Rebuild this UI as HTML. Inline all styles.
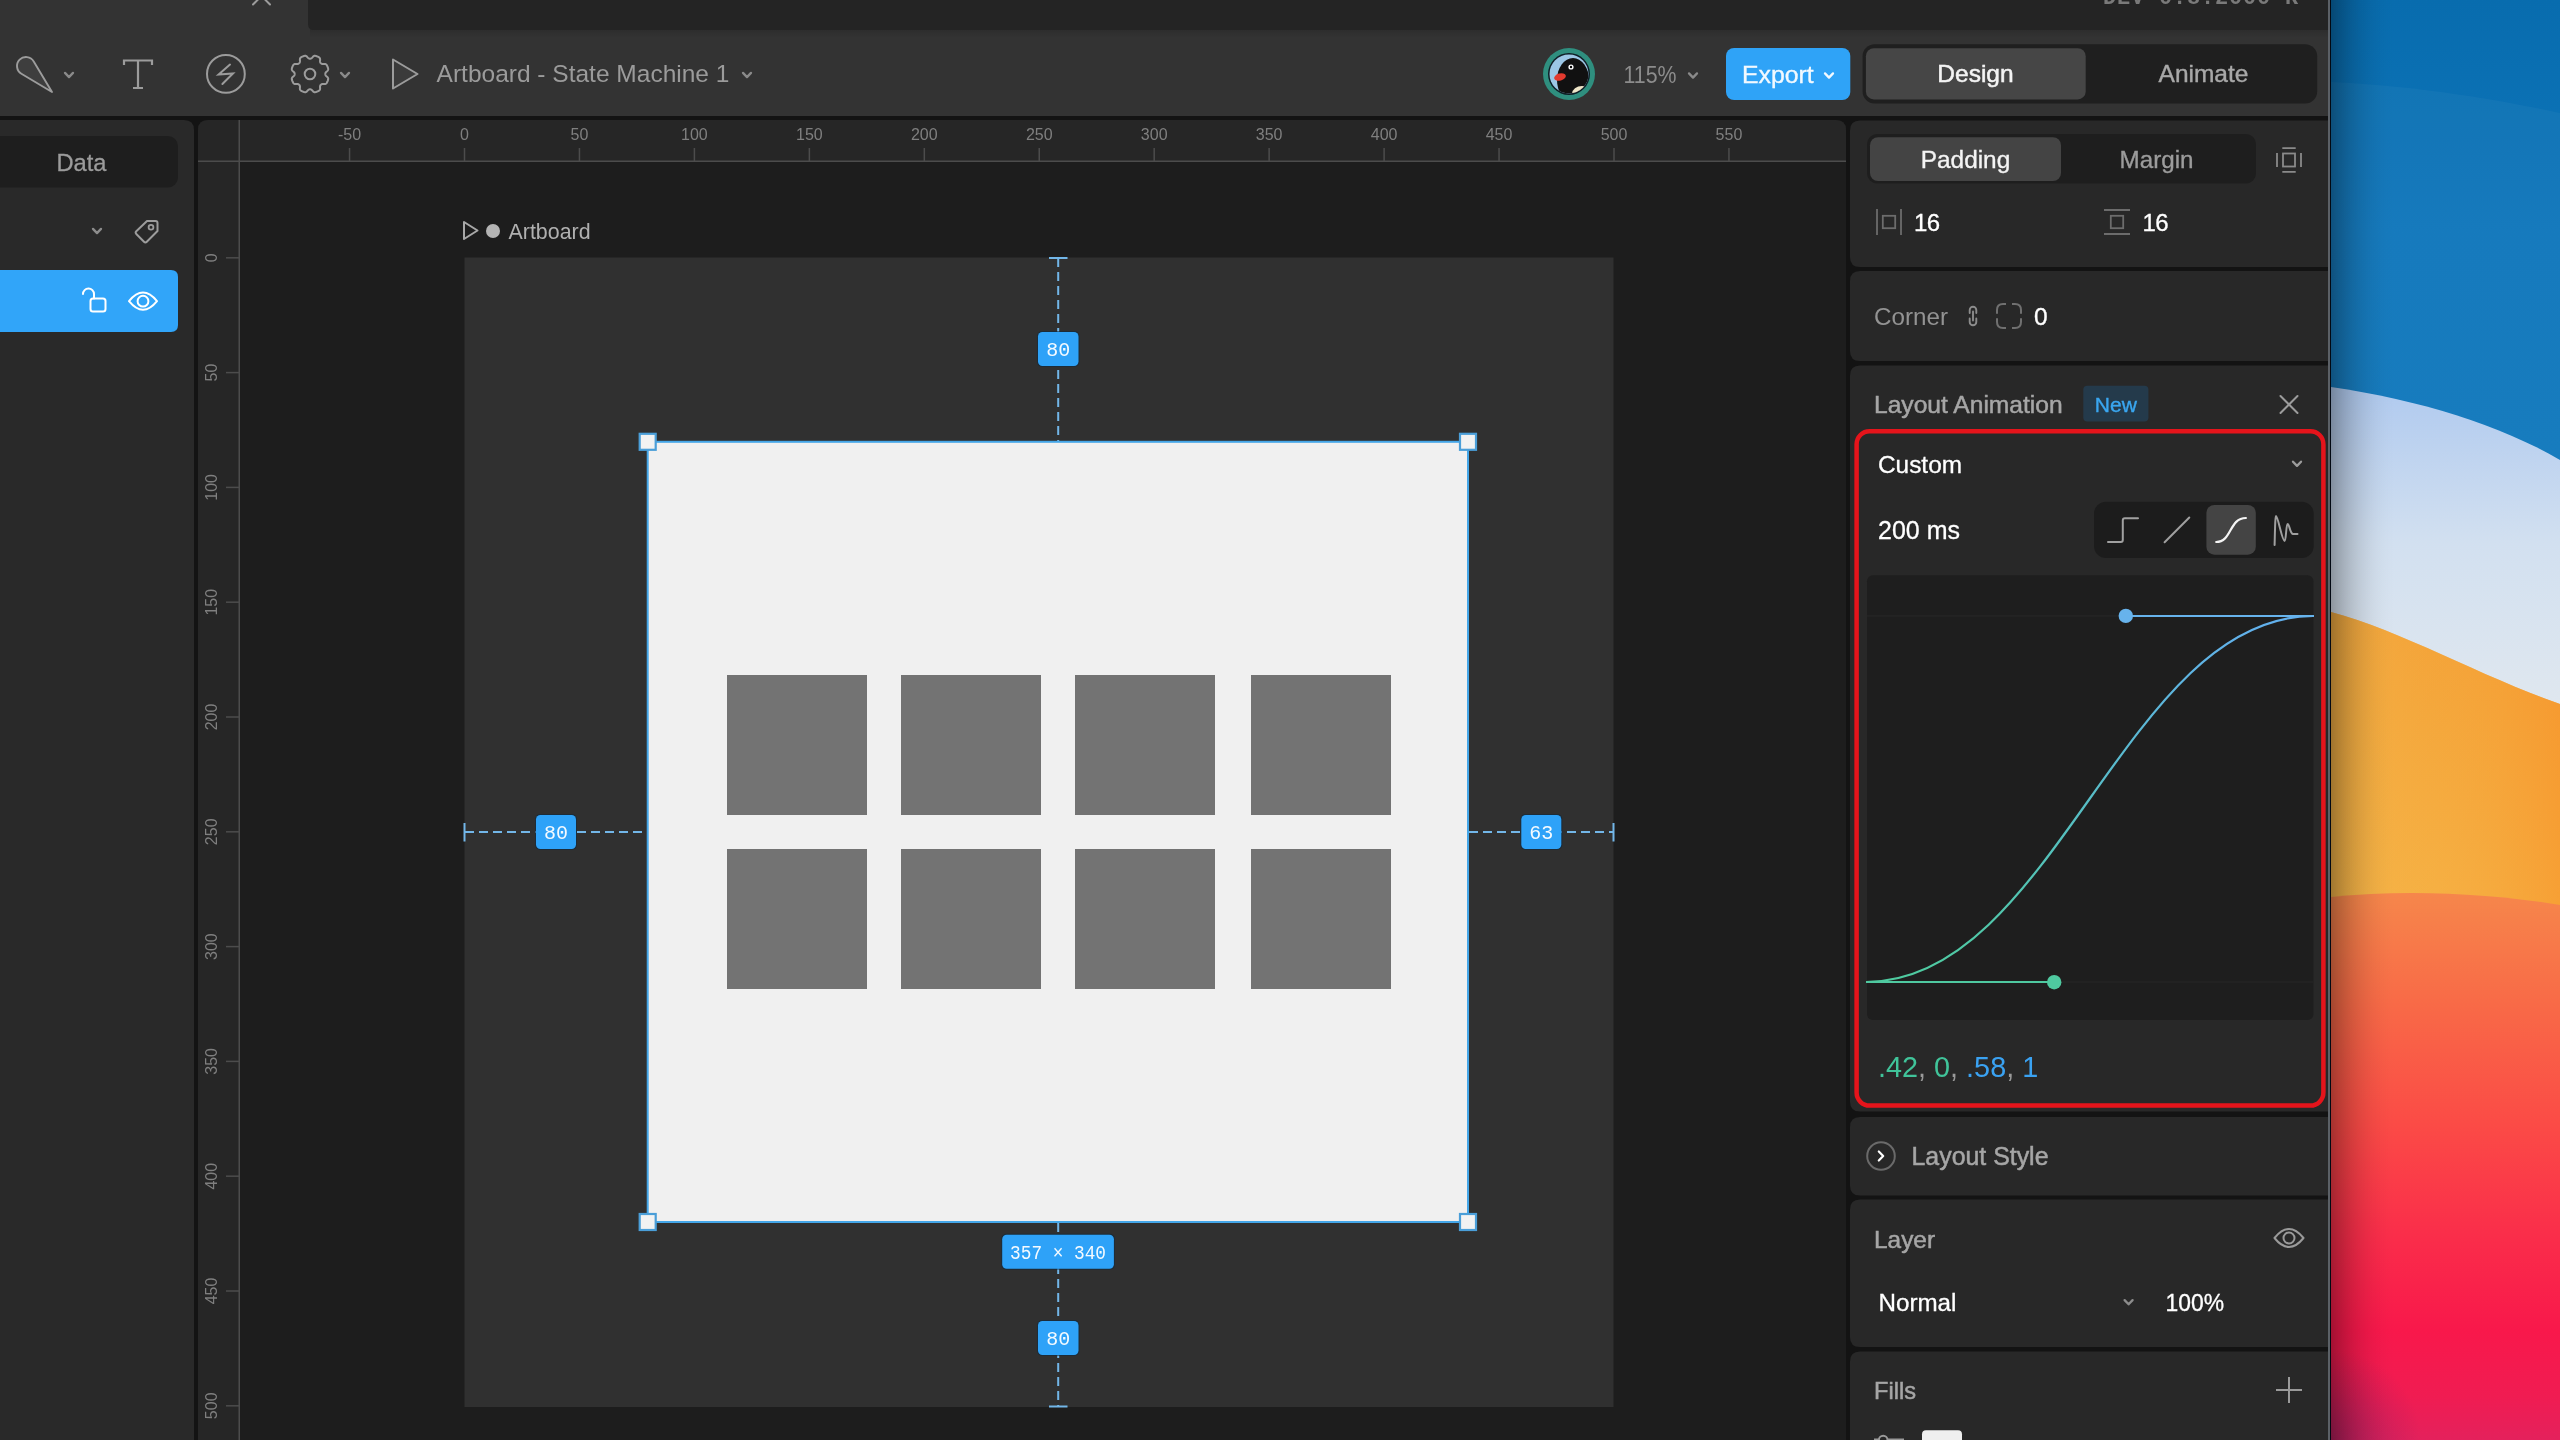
<!DOCTYPE html>
<html><head><meta charset="utf-8"><style>
html,body{margin:0;padding:0;width:2560px;height:1440px;overflow:hidden;background:#131313}
svg{display:block;will-change:transform}
</style></head><body>
<svg width="2560" height="1440" viewBox="0 0 2560 1440">
<rect x="0" y="0" width="2330" height="116" fill="#333333"/>
<linearGradient id="tsh" x1="0" y1="26" x2="0" y2="38" gradientUnits="userSpaceOnUse"><stop offset="0" stop-color="#000" stop-opacity="0.18"/><stop offset="1" stop-color="#000" stop-opacity="0"/></linearGradient>
<rect x="310" y="26" width="2019" height="12" fill="url(#tsh)"/>
<path d="M308 0 H2329 V30 H314 Q308 30 308 24 Z" fill="#242424"/>
<rect x="0" y="116" width="2328" height="1324" fill="#131313"/>
<path d="M0 120 H184 Q194 120 194 130 V1440 H0 Z" fill="#292929"/>
<path d="M208 120 H1836 Q1846 120 1846 130 V1440 H198 V130 Q198 120 208 120 Z" fill="#1d1d1d"/>
<path d="M208 120 H1836 Q1846 120 1846 130 V161 H198 V130 Q198 120 208 120 Z" fill="#262626"/>
<rect x="198" y="161" width="41" height="1279" fill="#262626"/>
<rect x="198" y="160.5" width="1648" height="1.5" fill="#4c4c4c"/>
<rect x="238.5" y="120" width="1.5" height="1320" fill="#4c4c4c"/>
<rect x="348.80" y="148" width="1.5" height="13" fill="#4c4c4c"/>
<text x="349.55" y="140" font-family="Liberation Sans" font-size="16" fill="#7f7f7f" text-anchor="middle">-50</text>
<rect x="463.75" y="148" width="1.5" height="13" fill="#4c4c4c"/>
<text x="464.50" y="140" font-family="Liberation Sans" font-size="16" fill="#7f7f7f" text-anchor="middle">0</text>
<rect x="578.70" y="148" width="1.5" height="13" fill="#4c4c4c"/>
<text x="579.45" y="140" font-family="Liberation Sans" font-size="16" fill="#7f7f7f" text-anchor="middle">50</text>
<rect x="693.65" y="148" width="1.5" height="13" fill="#4c4c4c"/>
<text x="694.40" y="140" font-family="Liberation Sans" font-size="16" fill="#7f7f7f" text-anchor="middle">100</text>
<rect x="808.60" y="148" width="1.5" height="13" fill="#4c4c4c"/>
<text x="809.35" y="140" font-family="Liberation Sans" font-size="16" fill="#7f7f7f" text-anchor="middle">150</text>
<rect x="923.55" y="148" width="1.5" height="13" fill="#4c4c4c"/>
<text x="924.30" y="140" font-family="Liberation Sans" font-size="16" fill="#7f7f7f" text-anchor="middle">200</text>
<rect x="1038.50" y="148" width="1.5" height="13" fill="#4c4c4c"/>
<text x="1039.25" y="140" font-family="Liberation Sans" font-size="16" fill="#7f7f7f" text-anchor="middle">250</text>
<rect x="1153.45" y="148" width="1.5" height="13" fill="#4c4c4c"/>
<text x="1154.20" y="140" font-family="Liberation Sans" font-size="16" fill="#7f7f7f" text-anchor="middle">300</text>
<rect x="1268.40" y="148" width="1.5" height="13" fill="#4c4c4c"/>
<text x="1269.15" y="140" font-family="Liberation Sans" font-size="16" fill="#7f7f7f" text-anchor="middle">350</text>
<rect x="1383.35" y="148" width="1.5" height="13" fill="#4c4c4c"/>
<text x="1384.10" y="140" font-family="Liberation Sans" font-size="16" fill="#7f7f7f" text-anchor="middle">400</text>
<rect x="1498.30" y="148" width="1.5" height="13" fill="#4c4c4c"/>
<text x="1499.05" y="140" font-family="Liberation Sans" font-size="16" fill="#7f7f7f" text-anchor="middle">450</text>
<rect x="1613.25" y="148" width="1.5" height="13" fill="#4c4c4c"/>
<text x="1614.00" y="140" font-family="Liberation Sans" font-size="16" fill="#7f7f7f" text-anchor="middle">500</text>
<rect x="1728.20" y="148" width="1.5" height="13" fill="#4c4c4c"/>
<text x="1728.95" y="140" font-family="Liberation Sans" font-size="16" fill="#7f7f7f" text-anchor="middle">550</text>
<rect x="226" y="257.05" width="13" height="1.5" fill="#4c4c4c"/>
<text transform="translate(217 257.80) rotate(-90)" font-family="Liberation Sans" font-size="16" fill="#7f7f7f" text-anchor="middle">0</text>
<rect x="226" y="371.85" width="13" height="1.5" fill="#4c4c4c"/>
<text transform="translate(217 372.60) rotate(-90)" font-family="Liberation Sans" font-size="16" fill="#7f7f7f" text-anchor="middle">50</text>
<rect x="226" y="486.65" width="13" height="1.5" fill="#4c4c4c"/>
<text transform="translate(217 487.40) rotate(-90)" font-family="Liberation Sans" font-size="16" fill="#7f7f7f" text-anchor="middle">100</text>
<rect x="226" y="601.45" width="13" height="1.5" fill="#4c4c4c"/>
<text transform="translate(217 602.20) rotate(-90)" font-family="Liberation Sans" font-size="16" fill="#7f7f7f" text-anchor="middle">150</text>
<rect x="226" y="716.25" width="13" height="1.5" fill="#4c4c4c"/>
<text transform="translate(217 717.00) rotate(-90)" font-family="Liberation Sans" font-size="16" fill="#7f7f7f" text-anchor="middle">200</text>
<rect x="226" y="831.05" width="13" height="1.5" fill="#4c4c4c"/>
<text transform="translate(217 831.80) rotate(-90)" font-family="Liberation Sans" font-size="16" fill="#7f7f7f" text-anchor="middle">250</text>
<rect x="226" y="945.85" width="13" height="1.5" fill="#4c4c4c"/>
<text transform="translate(217 946.60) rotate(-90)" font-family="Liberation Sans" font-size="16" fill="#7f7f7f" text-anchor="middle">300</text>
<rect x="226" y="1060.65" width="13" height="1.5" fill="#4c4c4c"/>
<text transform="translate(217 1061.40) rotate(-90)" font-family="Liberation Sans" font-size="16" fill="#7f7f7f" text-anchor="middle">350</text>
<rect x="226" y="1175.45" width="13" height="1.5" fill="#4c4c4c"/>
<text transform="translate(217 1176.20) rotate(-90)" font-family="Liberation Sans" font-size="16" fill="#7f7f7f" text-anchor="middle">400</text>
<rect x="226" y="1290.25" width="13" height="1.5" fill="#4c4c4c"/>
<text transform="translate(217 1291.00) rotate(-90)" font-family="Liberation Sans" font-size="16" fill="#7f7f7f" text-anchor="middle">450</text>
<rect x="226" y="1405.05" width="13" height="1.5" fill="#4c4c4c"/>
<text transform="translate(217 1405.80) rotate(-90)" font-family="Liberation Sans" font-size="16" fill="#7f7f7f" text-anchor="middle">500</text>
<path d="M464 222 L477.5 230.5 L464 239 Z" fill="none" stroke="#a8a8a8" stroke-width="2" stroke-linejoin="round"/>
<circle cx="493" cy="231" r="7" fill="#b4b4b4"/>
<text x="508.5" y="238.5" font-family="Liberation Sans" font-size="21.4" fill="#b0b0b0">Artboard</text>
<rect x="464.5" y="257.5" width="1149" height="1149.5" fill="#303030"/>
<rect x="647.7" y="441.8" width="820.3" height="780.2" fill="#f0f0f0"/>
<rect x="727" y="675" width="140" height="140" fill="#737373"/>
<rect x="901" y="675" width="140" height="140" fill="#737373"/>
<rect x="1075" y="675" width="140" height="140" fill="#737373"/>
<rect x="1251" y="675" width="140" height="140" fill="#737373"/>
<rect x="727" y="849" width="140" height="140" fill="#737373"/>
<rect x="901" y="849" width="140" height="140" fill="#737373"/>
<rect x="1075" y="849" width="140" height="140" fill="#737373"/>
<rect x="1251" y="849" width="140" height="140" fill="#737373"/>
<rect x="647.7" y="441.8" width="820.3" height="780.2" fill="none" stroke="#44a6e8" stroke-width="2"/>
<line x1="1058.2" y1="258" x2="1058.2" y2="441" stroke="#72b6e8" stroke-width="2" stroke-dasharray="9 5"/>
<rect x="1049" y="257" width="18.5" height="2" fill="#72b6e8"/>
<line x1="1058.2" y1="1223" x2="1058.2" y2="1406" stroke="#72b6e8" stroke-width="2" stroke-dasharray="9 5"/>
<rect x="1049" y="1405.5" width="18.5" height="2" fill="#72b6e8"/>
<line x1="465" y1="832" x2="647" y2="832" stroke="#72b6e8" stroke-width="2" stroke-dasharray="9 5"/>
<rect x="463.5" y="823" width="2" height="18.5" fill="#72b6e8"/>
<line x1="1469" y1="832" x2="1613" y2="832" stroke="#72b6e8" stroke-width="2" stroke-dasharray="9 5"/>
<rect x="1612.5" y="823" width="2" height="18.5" fill="#72b6e8"/>
<rect x="639.7" y="433.8" width="16" height="16" fill="#f2f2f2" stroke="#4a9ed8" stroke-width="2.2"/>
<rect x="1460" y="433.8" width="16" height="16" fill="#f2f2f2" stroke="#4a9ed8" stroke-width="2.2"/>
<rect x="639.7" y="1214" width="16" height="16" fill="#f2f2f2" stroke="#4a9ed8" stroke-width="2.2"/>
<rect x="1460" y="1214" width="16" height="16" fill="#f2f2f2" stroke="#4a9ed8" stroke-width="2.2"/>
<rect x="1037" y="331" width="42.5" height="36" rx="5" fill="#0f2a40" opacity="0.6"/>
<rect x="1038" y="332" width="40.5" height="34" rx="4.5" fill="#2ea2f8"/>
<text x="1058.25" y="356.0" font-family="Liberation Mono" font-size="20" fill="#f4faff" text-anchor="middle">80</text>
<rect x="1037" y="1320" width="42.5" height="36" rx="5" fill="#0f2a40" opacity="0.6"/>
<rect x="1038" y="1321" width="40.5" height="34" rx="4.5" fill="#2ea2f8"/>
<text x="1058.25" y="1345.0" font-family="Liberation Mono" font-size="20" fill="#f4faff" text-anchor="middle">80</text>
<rect x="535" y="814" width="42" height="36" rx="5" fill="#0f2a40" opacity="0.6"/>
<rect x="536" y="815" width="40" height="34" rx="4.5" fill="#2ea2f8"/>
<text x="556.0" y="839.0" font-family="Liberation Mono" font-size="20" fill="#f4faff" text-anchor="middle">80</text>
<rect x="1520.3" y="814" width="42" height="36" rx="5" fill="#0f2a40" opacity="0.6"/>
<rect x="1521.3" y="815" width="40" height="34" rx="4.5" fill="#2ea2f8"/>
<text x="1541.3" y="839.0" font-family="Liberation Mono" font-size="20" fill="#f4faff" text-anchor="middle">63</text>
<rect x="1001.2" y="1233.8" width="113.7" height="36" rx="5" fill="#0f2a40" opacity="0.6"/>
<rect x="1002.2" y="1234.8" width="111.7" height="34" rx="4.5" fill="#2ea2f8"/>
<text x="1058.05" y="1258.8" font-family="Liberation Mono" font-size="20" fill="#f4faff" text-anchor="middle" textLength="96" lengthAdjust="spacingAndGlyphs">357 × 340</text>
<path d="M253 4.5 L261.5 -4 L270 4.5" fill="none" stroke="#9c9c9c" stroke-width="2" stroke-linecap="round"/>
<text x="2103" y="4" font-family="Liberation Mono" font-size="22" font-weight="bold" fill="#7a7a7a" letter-spacing="0.8">DEV 0.8.2000 R</text>
<path d="M52 92 L21.39 73.73 A9 9 0 1 1 33.73 61.39 Z" fill="#3e3e3e" stroke="#9c9c9c" stroke-width="1.9" stroke-linejoin="round"/>
<path d="M65.0 72.9 L69 77.1 L73.0 72.9" fill="none" stroke="#8a8a8a" stroke-width="2.3" stroke-linecap="round" stroke-linejoin="round"/>
<path d="M124 65 V60.5 H152 V65 M138 60.5 V88 M133 88 H143" fill="none" stroke="#9c9c9c" stroke-width="2.2"/>
<circle cx="225.9" cy="73.9" r="18.9" fill="none" stroke="#9c9c9c" stroke-width="2"/>
<path d="M230 64.6 L218.6 74.6 L233 73.4 L222.4 84" fill="none" stroke="#9c9c9c" stroke-width="2" stroke-linejoin="miter" stroke-linecap="round"/>
<polygon points="325.33,74.00 325.33,74.24 325.36,74.48 325.40,74.73 325.47,74.97 325.57,75.23 325.73,75.49 325.94,75.76 326.22,76.05 326.56,76.36 326.94,76.68 327.32,77.02 327.65,77.37 327.90,77.71 328.07,78.04 328.17,78.36 328.21,78.67 328.20,78.98 328.17,79.28 328.11,79.57 328.04,79.86 327.96,80.15 327.87,80.43 327.77,80.71 327.66,80.99 327.55,81.27 327.44,81.55 327.31,81.82 327.18,82.09 327.05,82.35 326.90,82.61 326.75,82.87 326.58,83.11 326.39,83.35 326.18,83.57 325.93,83.76 325.64,83.92 325.28,84.04 324.86,84.10 324.38,84.11 323.87,84.08 323.37,84.04 322.91,84.02 322.51,84.03 322.17,84.07 321.88,84.15 321.63,84.25 321.40,84.38 321.20,84.52 321.01,84.67 320.84,84.84 320.67,85.01 320.52,85.20 320.38,85.40 320.25,85.63 320.15,85.88 320.07,86.17 320.03,86.51 320.02,86.91 320.04,87.37 320.08,87.87 320.11,88.38 320.10,88.86 320.04,89.28 319.92,89.64 319.76,89.93 319.57,90.18 319.35,90.39 319.11,90.58 318.87,90.75 318.61,90.90 318.35,91.05 318.09,91.18 317.82,91.31 317.55,91.44 317.27,91.55 316.99,91.66 316.71,91.77 316.43,91.87 316.15,91.96 315.86,92.04 315.57,92.11 315.28,92.17 314.98,92.20 314.67,92.21 314.36,92.17 314.04,92.07 313.71,91.90 313.37,91.65 313.02,91.32 312.68,90.94 312.36,90.56 312.05,90.22 311.76,89.94 311.49,89.73 311.23,89.57 310.97,89.47 310.73,89.40 310.48,89.36 310.24,89.33 310.00,89.33 309.76,89.33 309.52,89.36 309.27,89.40 309.03,89.47 308.77,89.57 308.51,89.73 308.24,89.94 307.95,90.22 307.64,90.56 307.32,90.94 306.98,91.32 306.63,91.65 306.29,91.90 305.96,92.07 305.64,92.17 305.33,92.21 305.02,92.20 304.72,92.17 304.43,92.11 304.14,92.04 303.85,91.96 303.57,91.87 303.29,91.77 303.01,91.66 302.73,91.55 302.45,91.44 302.18,91.31 301.91,91.18 301.65,91.05 301.39,90.90 301.13,90.75 300.89,90.58 300.65,90.39 300.43,90.18 300.24,89.93 300.08,89.64 299.96,89.28 299.90,88.86 299.89,88.38 299.92,87.87 299.96,87.37 299.98,86.91 299.97,86.51 299.93,86.17 299.85,85.88 299.75,85.63 299.62,85.40 299.48,85.20 299.33,85.01 299.16,84.84 298.99,84.67 298.80,84.52 298.60,84.38 298.37,84.25 298.12,84.15 297.83,84.07 297.49,84.03 297.09,84.02 296.63,84.04 296.13,84.08 295.62,84.11 295.14,84.10 294.72,84.04 294.36,83.92 294.07,83.76 293.82,83.57 293.61,83.35 293.42,83.11 293.25,82.87 293.10,82.61 292.95,82.35 292.82,82.09 292.69,81.82 292.56,81.55 292.45,81.27 292.34,80.99 292.23,80.71 292.13,80.43 292.04,80.15 291.96,79.86 291.89,79.57 291.83,79.28 291.80,78.98 291.79,78.67 291.83,78.36 291.93,78.04 292.10,77.71 292.35,77.37 292.68,77.02 293.06,76.68 293.44,76.36 293.78,76.05 294.06,75.76 294.27,75.49 294.43,75.23 294.53,74.97 294.60,74.73 294.64,74.48 294.67,74.24 294.67,74.00 294.67,73.76 294.64,73.52 294.60,73.27 294.53,73.03 294.43,72.77 294.27,72.51 294.06,72.24 293.78,71.95 293.44,71.64 293.06,71.32 292.68,70.98 292.35,70.63 292.10,70.29 291.93,69.96 291.83,69.64 291.79,69.33 291.80,69.02 291.83,68.72 291.89,68.43 291.96,68.14 292.04,67.85 292.13,67.57 292.23,67.29 292.34,67.01 292.45,66.73 292.56,66.45 292.69,66.18 292.82,65.91 292.95,65.65 293.10,65.39 293.25,65.13 293.42,64.89 293.61,64.65 293.82,64.43 294.07,64.24 294.36,64.08 294.72,63.96 295.14,63.90 295.62,63.89 296.13,63.92 296.63,63.96 297.09,63.98 297.49,63.97 297.83,63.93 298.12,63.85 298.37,63.75 298.60,63.62 298.80,63.48 298.99,63.33 299.16,63.16 299.33,62.99 299.48,62.80 299.62,62.60 299.75,62.37 299.85,62.12 299.93,61.83 299.97,61.49 299.98,61.09 299.96,60.63 299.92,60.13 299.89,59.62 299.90,59.14 299.96,58.72 300.08,58.36 300.24,58.07 300.43,57.82 300.65,57.61 300.89,57.42 301.13,57.25 301.39,57.10 301.65,56.95 301.91,56.82 302.18,56.69 302.45,56.56 302.73,56.45 303.01,56.34 303.29,56.23 303.57,56.13 303.85,56.04 304.14,55.96 304.43,55.89 304.72,55.83 305.02,55.80 305.33,55.79 305.64,55.83 305.96,55.93 306.29,56.10 306.63,56.35 306.98,56.68 307.32,57.06 307.64,57.44 307.95,57.78 308.24,58.06 308.51,58.27 308.77,58.43 309.03,58.53 309.27,58.60 309.52,58.64 309.76,58.67 310.00,58.67 310.24,58.67 310.48,58.64 310.73,58.60 310.97,58.53 311.23,58.43 311.49,58.27 311.76,58.06 312.05,57.78 312.36,57.44 312.68,57.06 313.02,56.68 313.37,56.35 313.71,56.10 314.04,55.93 314.36,55.83 314.67,55.79 314.98,55.80 315.28,55.83 315.57,55.89 315.86,55.96 316.15,56.04 316.43,56.13 316.71,56.23 316.99,56.34 317.27,56.45 317.55,56.56 317.82,56.69 318.09,56.82 318.35,56.95 318.61,57.10 318.87,57.25 319.11,57.42 319.35,57.61 319.57,57.82 319.76,58.07 319.92,58.36 320.04,58.72 320.10,59.14 320.11,59.62 320.08,60.13 320.04,60.63 320.02,61.09 320.03,61.49 320.07,61.83 320.15,62.12 320.25,62.37 320.38,62.60 320.52,62.80 320.67,62.99 320.84,63.16 321.01,63.33 321.20,63.48 321.40,63.62 321.63,63.75 321.88,63.85 322.17,63.93 322.51,63.97 322.91,63.98 323.37,63.96 323.87,63.92 324.38,63.89 324.86,63.90 325.28,63.96 325.64,64.08 325.93,64.24 326.18,64.43 326.39,64.65 326.58,64.89 326.75,65.13 326.90,65.39 327.05,65.65 327.18,65.91 327.31,66.18 327.44,66.45 327.55,66.73 327.66,67.01 327.77,67.29 327.87,67.57 327.96,67.85 328.04,68.14 328.11,68.43 328.17,68.72 328.20,69.02 328.21,69.33 328.17,69.64 328.07,69.96 327.90,70.29 327.65,70.63 327.32,70.98 326.94,71.32 326.56,71.64 326.22,71.95 325.94,72.24 325.73,72.51 325.57,72.77 325.47,73.03 325.40,73.27 325.36,73.52 325.33,73.76 325.33,74.00" fill="none" stroke="#9c9c9c" stroke-width="2"/>
<circle cx="310" cy="74" r="5.3" fill="none" stroke="#9c9c9c" stroke-width="2"/>
<path d="M341.0 72.9 L345 77.1 L349.0 72.9" fill="none" stroke="#8a8a8a" stroke-width="2.3" stroke-linecap="round" stroke-linejoin="round"/>
<path d="M393 59.5 L417.5 74 L393 88.5 Z" fill="#3b3b3b" stroke="#9c9c9c" stroke-width="2" stroke-linejoin="round"/>
<text x="436.6" y="82" font-family="Liberation Sans" font-size="24.5" fill="#9b9b9b">Artboard - State Machine 1</text>
<path d="M743.0 72.9 L747 77.1 L751.0 72.9" fill="none" stroke="#8a8a8a" stroke-width="2.3" stroke-linecap="round" stroke-linejoin="round"/>
<circle cx="1569" cy="74" r="26" fill="#2f8f7f"/>
<circle cx="1569" cy="74" r="21" fill="#0f1e26"/>
<circle cx="1569" cy="74" r="19.5" fill="#9cc7e6"/>
<clipPath id="av"><circle cx="1569" cy="74" r="19.5"/></clipPath>
<g clip-path="url(#av)"><ellipse cx="1573" cy="80" rx="16" ry="22" fill="#111"/><ellipse cx="1582" cy="94" rx="10" ry="8" fill="#efe6c8"/><ellipse cx="1560" cy="77" rx="6" ry="3.6" fill="#e23a2e" transform="rotate(-15 1560 77)"/><circle cx="1571" cy="67" r="2.6" fill="#fff"/><circle cx="1571" cy="67" r="1.2" fill="#000"/></g>
<text x="1623.5" y="83.2" font-family="Liberation Sans" font-size="24" fill="#8c8c8c" textLength="53" lengthAdjust="spacingAndGlyphs">115%</text>
<path d="M1689.0 73.4 L1693 77.6 L1697.0 73.4" fill="none" stroke="#8a8a8a" stroke-width="2.3" stroke-linecap="round" stroke-linejoin="round"/>
<rect x="1726" y="48" width="124.3" height="52" rx="8" fill="#2fa3f7"/>
<text x="1742" y="83.2" font-family="Liberation Sans" font-size="24.8" fill="#f2f9ff" stroke="#f2f9ff" stroke-width="0.35">Export</text>
<path d="M1825.0 73.4 L1829 77.6 L1833.0 73.4" fill="none" stroke="#f2f9ff" stroke-width="2.3" stroke-linecap="round" stroke-linejoin="round"/>
<rect x="1862.6" y="44.3" width="454.6" height="59.1" rx="12" fill="#1f1f1f"/>
<rect x="1865.9" y="48.2" width="219.8" height="51.2" rx="8" fill="#464646"/>
<text x="1975.5" y="82.2" font-family="Liberation Sans" font-size="24.5" fill="#f4f4f4" text-anchor="middle" stroke="#f4f4f4" stroke-width="0.5">Design</text>
<text x="2203.5" y="82.2" font-family="Liberation Sans" font-size="24.5" fill="#a8a8a8" text-anchor="middle" stroke="#a8a8a8" stroke-width="0.4">Animate</text>
<rect x="-10" y="136" width="188" height="51.5" rx="10" fill="#1e1e1e"/>
<text x="81.5" y="170.8" font-family="Liberation Sans" font-size="23.7" fill="#9c9c9c" text-anchor="middle" stroke="#9c9c9c" stroke-width="0.3">Data</text>
<path d="M93.0 228.9 L97 233.1 L101.0 228.9" fill="none" stroke="#8c8c8c" stroke-width="2.3" stroke-linecap="round" stroke-linejoin="round"/>
<path d="M147 221 H155.5 Q157.5 221 157.5 223 V231 L146.8 241.7 Q145.4 243.1 144 241.7 L136.3 234 Q134.9 232.6 136.3 231.2 Z" fill="none" stroke="#9c9c9c" stroke-width="2" stroke-linejoin="round"/>
<circle cx="151" cy="227.2" r="2.4" fill="none" stroke="#9c9c9c" stroke-width="1.8"/>
<path d="M-10 270 H171 Q178 270 178 277 V325 Q178 332 171 332 H-10 Z" fill="#31a5f9"/>
<path d="M83 294 A5.5 5.5 0 0 1 94 294 V298.5" fill="none" stroke="#fff" stroke-width="2" stroke-linecap="round"/>
<rect x="90.5" y="298.5" width="15" height="13" rx="2.5" fill="none" stroke="#fff" stroke-width="2"/>
<path d="M129 301.2 Q143 284 157 301.2 Q143 318.4 129 301.2 Z" fill="none" stroke="#fff" stroke-width="2" stroke-linejoin="round"/>
<circle cx="143" cy="301.2" r="5.4" fill="none" stroke="#fff" stroke-width="2"/>
<path d="M1860 120.5 H2328 V267 H1860 Q1850 267 1850 257 V130.5 Q1850 120.5 1860 120.5 Z" fill="#282828"/>
<path d="M1860 271 H2328 V361 H1860 Q1850 361 1850 351 V281 Q1850 271 1860 271 Z" fill="#282828"/>
<path d="M1860 365.5 H2328 V1111.5 H1860 Q1850 1111.5 1850 1101.5 V375.5 Q1850 365.5 1860 365.5 Z" fill="#282828"/>
<path d="M1860 1117 H2328 V1195.5 H1860 Q1850 1195.5 1850 1185.5 V1127 Q1850 1117 1860 1117 Z" fill="#282828"/>
<path d="M1860 1199.5 H2328 V1347 H1860 Q1850 1347 1850 1337 V1209.5 Q1850 1199.5 1860 1199.5 Z" fill="#282828"/>
<path d="M1860 1351.5 H2328 V1460 H1860 Q1850 1460 1850 1450 V1361.5 Q1850 1351.5 1860 1351.5 Z" fill="#282828"/>
<rect x="1867" y="134" width="389" height="49.5" rx="10" fill="#1e1e1e"/>
<rect x="1870" y="137.2" width="191" height="43.8" rx="8" fill="#444444"/>
<text x="1965.5" y="167.5" font-family="Liberation Sans" font-size="24.4" fill="#f4f4f4" text-anchor="middle" stroke="#f4f4f4" stroke-width="0.35">Padding</text>
<text x="2156.5" y="167.5" font-family="Liberation Sans" font-size="24.2" fill="#9c9c9c" text-anchor="middle" stroke="#9c9c9c" stroke-width="0.35">Margin</text>
<path d="M2277 153 V167 M2301 153 V167 M2282.3 148.2 H2295.7 M2282.3 171.8 H2295.7" stroke="#8a8a8a" stroke-width="1.8" fill="none"/>
<rect x="2283" y="153.5" width="12" height="13" fill="none" stroke="#8a8a8a" stroke-width="1.8"/>
<path d="M1877 209 V235 M1901 209 V235" stroke="#6c6c6c" stroke-width="1.8" fill="none"/>
<rect x="1882.8" y="215.8" width="12.4" height="12.4" fill="none" stroke="#6c6c6c" stroke-width="1.8"/>
<text x="1914" y="231" font-family="Liberation Sans" font-size="24" fill="#ffffff" letter-spacing="-0.5" stroke="#fff" stroke-width="0.3">16</text>
<path d="M2104 210 H2130 M2104 234 H2130" stroke="#6c6c6c" stroke-width="1.8" fill="none"/>
<rect x="2110.8" y="215.8" width="12.4" height="12.4" fill="none" stroke="#6c6c6c" stroke-width="1.8"/>
<text x="2142.5" y="231" font-family="Liberation Sans" font-size="24" fill="#ffffff" letter-spacing="-0.5" stroke="#fff" stroke-width="0.3">16</text>
<text x="1874" y="324.5" font-family="Liberation Sans" font-size="24.2" fill="#939393">Corner</text>
<path d="M1969.7 313 V310 A3.3 3.3 0 0 1 1976.3 310 V313 M1969.7 318.5 V322 A3.3 3.3 0 0 0 1976.3 322 V318.5 M1973 311.5 V320.5" fill="none" stroke="#8c8c8c" stroke-width="1.9" stroke-linecap="round"/>
<path d="M2006 304 H2003 Q1997 304 1997 310 V313.8 M1997 318.3 V322 Q1997 328 2003 328 H2006 M2012 328 H2015 Q2021 328 2021 322 V318.3 M2021 313.8 V310 Q2021 304 2015 304 H2012" fill="none" stroke="#707070" stroke-width="2"/>
<text x="2034" y="325.3" font-family="Liberation Sans" font-size="24.5" fill="#ffffff" stroke="#fff" stroke-width="0.3">0</text>
<text x="1874" y="412.6" font-family="Liberation Sans" font-size="24.6" fill="#a6a6a6" stroke="#a6a6a6" stroke-width="0.5">Layout Animation</text>
<rect x="2083.3" y="385.8" width="65.1" height="35.8" rx="4" fill="#243a4b"/>
<text x="2115.8" y="412" font-family="Liberation Sans" font-size="21" fill="#3aa6f0" text-anchor="middle" stroke="#3aa6f0" stroke-width="0.4">New</text>
<path d="M2280.5 396 L2297.5 413 M2297.5 396 L2280.5 413" stroke="#9c9c9c" stroke-width="2" stroke-linecap="round"/>
<text x="1878" y="473.3" font-family="Liberation Sans" font-size="24.4" fill="#ffffff" stroke="#fff" stroke-width="0.3">Custom</text>
<path d="M2293.0 461.7 L2297 465.90000000000003 L2301.0 461.7" fill="none" stroke="#9c9c9c" stroke-width="2.3" stroke-linecap="round" stroke-linejoin="round"/>
<text x="1878" y="539" font-family="Liberation Sans" font-size="25" fill="#ffffff" stroke="#fff" stroke-width="0.3">200 ms</text>
<rect x="2094" y="501.7" width="219.7" height="56.2" rx="12" fill="#1c1c1c"/>
<rect x="2206.4" y="504.9" width="49.4" height="49.8" rx="8" fill="#444444"/>
<path d="M2108 541.9 H2120.8 Q2122.8 541.9 2122.8 539.9 V520.2 Q2122.8 518.2 2124.8 518.2 H2138" fill="none" stroke="#a0a0a0" stroke-width="2" stroke-linecap="round"/>
<path d="M2164.6 542.2 L2189.3 517.5" fill="none" stroke="#a0a0a0" stroke-width="2" stroke-linecap="round"/>
<path d="M2216.2 542 C2232 542 2229 518 2245.9 518" fill="none" stroke="#f4f4f4" stroke-width="2.2" stroke-linecap="round"/>
<path d="M2274.6 545 C2275 530 2275.2 516 2276 516 C2278 516 2282 541 2284.6 541 C2286.2 541 2286 524 2287.6 524 C2289.5 524 2290 534 2293 534 H2297.5" fill="none" stroke="#a0a0a0" stroke-width="2" stroke-linecap="round" stroke-linejoin="round"/>
<rect x="1867" y="575.3" width="446.5" height="444.7" rx="6" fill="#1e1e1e"/>
<rect x="1867" y="615.3" width="446.5" height="1.2" fill="#262626"/>
<rect x="1867" y="981.4" width="446.5" height="1.2" fill="#262626"/>
<linearGradient id="cg" x1="0" y1="982" x2="0" y2="616" gradientUnits="userSpaceOnUse"><stop offset="0" stop-color="#4ecb9f"/><stop offset="1" stop-color="#62b0ee"/></linearGradient>
<path d="M1866 982 C2053.7 982 2125.3 616 2313 616" fill="none" stroke="url(#cg)" stroke-width="2.2"/>
<path d="M2126 616 H2314" stroke="#67b3ec" stroke-width="2.2"/>
<path d="M1866 982 H2054" stroke="#4fc9a0" stroke-width="2.2"/>
<circle cx="2125.8" cy="615.9" r="7.2" fill="#67b3ec"/>
<circle cx="2054.2" cy="982.2" r="7.2" fill="#4fc9a0"/>
<text x="1878" y="1076.7" font-family="Liberation Sans" font-size="28.8"><tspan fill="#40c49a">.42</tspan><tspan fill="#9a9a9a">,</tspan><tspan fill="#40c49a"> 0</tspan><tspan fill="#9a9a9a">,</tspan><tspan fill="#3aa2f2"> .58</tspan><tspan fill="#9a9a9a">,</tspan><tspan fill="#3aa2f2"> 1</tspan></text>
<rect x="1856.6" y="431.2" width="466.8" height="674.4" rx="13" fill="none" stroke="#e5141b" stroke-width="4.5"/>
<circle cx="1881" cy="1156" r="13.8" fill="none" stroke="#6a6a6a" stroke-width="2"/>
<path d="M1878.8 1151.5 L1883.2 1156 L1878.8 1160.5" fill="none" stroke="#ffffff" stroke-width="2.2" stroke-linecap="round" stroke-linejoin="round"/>
<text x="1911.5" y="1165" font-family="Liberation Sans" font-size="24.9" fill="#a6a6a6" stroke="#a6a6a6" stroke-width="0.5">Layout Style</text>
<text x="1874" y="1247.6" font-family="Liberation Sans" font-size="24.4" fill="#a6a6a6" stroke="#a6a6a6" stroke-width="0.5">Layer</text>
<path d="M2274.5 1238 Q2289 1220 2303.5 1238 Q2289 1256 2274.5 1238 Z" fill="none" stroke="#9a9a9a" stroke-width="2" stroke-linejoin="round"/>
<circle cx="2289" cy="1238" r="5.5" fill="none" stroke="#9a9a9a" stroke-width="2"/>
<text x="1878.5" y="1311.4" font-family="Liberation Sans" font-size="24.2" fill="#ffffff" stroke="#fff" stroke-width="0.3">Normal</text>
<path d="M2124.6 1300.1000000000001 L2128.6 1304.3 L2132.6 1300.1000000000001" fill="none" stroke="#8c8c8c" stroke-width="2.3" stroke-linecap="round" stroke-linejoin="round"/>
<text x="2165.5" y="1311.4" font-family="Liberation Sans" font-size="24" fill="#ffffff" stroke="#fff" stroke-width="0.3" textLength="58.5" lengthAdjust="spacingAndGlyphs">100%</text>
<text x="1874" y="1398.7" font-family="Liberation Sans" font-size="23.6" fill="#a6a6a6" stroke="#a6a6a6" stroke-width="0.5">Fills</text>
<path d="M2276 1390 H2302 M2289 1377 V1403" stroke="#9a9a9a" stroke-width="2"/>
<rect x="1922" y="1430.3" width="40" height="30" rx="4" fill="#efefef"/>
<path d="M1874 1439.5 H1879 M1887.5 1439.5 H1904" fill="none" stroke="#9a9a9a" stroke-width="2"/>
<circle cx="1883.2" cy="1440" r="4.3" fill="none" stroke="#9a9a9a" stroke-width="2"/>
<rect x="2328" y="0" width="2" height="1440" fill="#5b6066"/>
<rect x="2330" y="0" width="1.2" height="1440" fill="#020812"/>
<clipPath id="wp"><rect x="2331" y="0" width="229" height="1440"/></clipPath>
<g clip-path="url(#wp)">
<linearGradient id="wb" x1="0" y1="0" x2="0" y2="460" gradientUnits="userSpaceOnUse"><stop offset="0" stop-color="#086cae"/><stop offset="0.5" stop-color="#0e76bb"/><stop offset="1" stop-color="#0f78bc"/></linearGradient>
<rect x="2331" y="0" width="229" height="720" fill="url(#wb)"/>
<path d="M2331 82 C2420 86 2500 100 2560 113 V720 H2331 Z" fill="#ffffff" opacity="0.035"/>
<linearGradient id="wl" x1="0" y1="387" x2="0" y2="700" gradientUnits="userSpaceOnUse"><stop offset="0" stop-color="#b0caef"/><stop offset="0.5" stop-color="#d2e0f0"/><stop offset="1" stop-color="#dfe7ef"/></linearGradient>
<path d="M2331 387 C2420 400 2500 425 2560 460 V1000 H2331 Z" fill="url(#wl)"/>
<linearGradient id="wo" x1="0" y1="611" x2="0" y2="900" gradientUnits="userSpaceOnUse"><stop offset="0" stop-color="#f39d33"/><stop offset="1" stop-color="#f6b042"/></linearGradient>
<path d="M2331 612 C2400 630 2480 676 2560 704 V1100 H2331 Z" fill="url(#wo)"/>
<linearGradient id="wo2" x1="2331" y1="0" x2="2560" y2="0" gradientUnits="userSpaceOnUse"><stop offset="0" stop-color="#f2b84e" stop-opacity="0.55"/><stop offset="0.45" stop-color="#f5b045" stop-opacity="0.3"/><stop offset="1" stop-color="#f7952c" stop-opacity="0.6"/></linearGradient>
<path d="M2331 612 C2400 630 2480 676 2560 704 V1100 H2331 Z" fill="url(#wo2)"/>
<linearGradient id="wr" x1="0" y1="895" x2="0" y2="1440" gradientUnits="userSpaceOnUse"><stop offset="0" stop-color="#f6864b"/><stop offset="0.2" stop-color="#f86a47"/><stop offset="0.42" stop-color="#fb4b46"/><stop offset="0.62" stop-color="#fa2e4a"/><stop offset="0.8" stop-color="#f8184b"/><stop offset="0.92" stop-color="#f01c52"/><stop offset="1" stop-color="#e4215c"/></linearGradient>
<path d="M2331 897 C2400 890 2480 892 2560 905 V1440 H2331 Z" fill="url(#wr)"/>
<radialGradient id="wp2" cx="2331" cy="1440" r="90" gradientUnits="userSpaceOnUse"><stop offset="0" stop-color="#9a1d5a" stop-opacity="0.7"/><stop offset="1" stop-color="#9a1d5a" stop-opacity="0"/></radialGradient>
<rect x="2331" y="1300" width="229" height="140" fill="url(#wp2)"/>
<linearGradient id="ws" x1="2331" y1="0" x2="2400" y2="0" gradientUnits="userSpaceOnUse"><stop offset="0.00" stop-color="#000" stop-opacity="0.3400"/><stop offset="0.05" stop-color="#000" stop-opacity="0.3037"/><stop offset="0.10" stop-color="#000" stop-opacity="0.2697"/><stop offset="0.15" stop-color="#000" stop-opacity="0.2378"/><stop offset="0.20" stop-color="#000" stop-opacity="0.2081"/><stop offset="0.25" stop-color="#000" stop-opacity="0.1806"/><stop offset="0.30" stop-color="#000" stop-opacity="0.1551"/><stop offset="0.35" stop-color="#000" stop-opacity="0.1318"/><stop offset="0.40" stop-color="#000" stop-opacity="0.1105"/><stop offset="0.45" stop-color="#000" stop-opacity="0.0913"/><stop offset="0.50" stop-color="#000" stop-opacity="0.0740"/><stop offset="0.55" stop-color="#000" stop-opacity="0.0587"/><stop offset="0.60" stop-color="#000" stop-opacity="0.0453"/><stop offset="0.65" stop-color="#000" stop-opacity="0.0338"/><stop offset="0.70" stop-color="#000" stop-opacity="0.0241"/><stop offset="0.75" stop-color="#000" stop-opacity="0.0161"/><stop offset="0.80" stop-color="#000" stop-opacity="0.0099"/><stop offset="0.85" stop-color="#000" stop-opacity="0.0052"/><stop offset="0.90" stop-color="#000" stop-opacity="0.0021"/><stop offset="0.95" stop-color="#000" stop-opacity="0.0005"/><stop offset="1.00" stop-color="#000" stop-opacity="0.0000"/></linearGradient>
<rect x="2331" y="0" width="70" height="1440" fill="url(#ws)"/>
</g>
</svg>
</body></html>
